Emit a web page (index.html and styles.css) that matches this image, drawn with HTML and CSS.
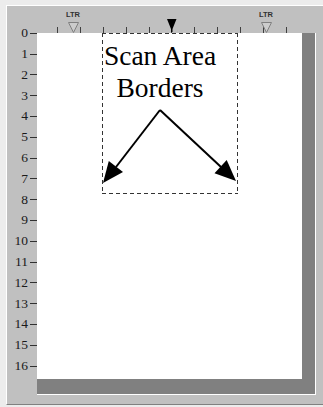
FILE: index.html
```html
<!DOCTYPE html>
<html>
<head>
<meta charset="utf-8">
<link rel="stylesheet" href="styles.css">
</head>
<body>
<div class="frame">
  <div class="vruler">
    <div class="row"><span class="num">0</span><span class="dash"></span></div>
    <div class="row"><span class="num">1</span><span class="dash"></span></div>
    <div class="row"><span class="num">2</span><span class="dash"></span></div>
    <div class="row"><span class="num">3</span><span class="dash"></span></div>
    <div class="row"><span class="num">4</span><span class="dash"></span></div>
    <div class="row"><span class="num">5</span><span class="dash"></span></div>
    <div class="row"><span class="num">6</span><span class="dash"></span></div>
    <div class="row"><span class="num">7</span><span class="dash"></span></div>
    <div class="row"><span class="num">8</span><span class="dash"></span></div>
    <div class="row"><span class="num">9</span><span class="dash"></span></div>
    <div class="row"><span class="num">10</span><span class="dash"></span></div>
    <div class="row"><span class="num">11</span><span class="dash"></span></div>
    <div class="row"><span class="num">12</span><span class="dash"></span></div>
    <div class="row"><span class="num">13</span><span class="dash"></span></div>
    <div class="row"><span class="num">14</span><span class="dash"></span></div>
    <div class="row"><span class="num">15</span><span class="dash"></span></div>
    <div class="row"><span class="num">16</span><span class="dash"></span></div>
  </div>
  <div class="hruler">
    <div class="ticks">
      <span class="tick"></span><span class="tick"></span><span class="tick"></span><span class="tick"></span>
      <span class="tick"></span><span class="tick"></span><span class="tick"></span><span class="tick"></span>
      <span class="tick"></span><span class="tick"></span><span class="tick"></span>
    </div>
    <div class="marker ltr-left">
      <span class="ltr">LTR</span>
      <svg class="hollow" width="11" height="11" viewBox="0 0 11 11"><polygon points="0.5,0.5 10.5,0.5 5.5,10.5" /></svg>
    </div>
    <div class="marker ltr-right">
      <span class="ltr">LTR</span>
      <svg class="hollow" width="11" height="11" viewBox="0 0 11 11"><polygon points="0.5,0.5 10.5,0.5 5.5,10.5" /></svg>
    </div>
    <svg class="tab" width="10" height="13" viewBox="0 0 10 13"><polygon points="0,0 9.5,0 5.5,10 5.5,13 4,13 4,10" /></svg>
  </div>
  <div class="desk">
    <div class="page">
      <div class="scan">
        <div class="scan-text">Scan Area<br>Borders</div>
        <svg class="arrows" width="136" height="161" viewBox="0 0 136 161">
          <line x1="58" y1="77" x2="14" y2="134" />
          <polygon points="1,150 6.8,128 21,139" />
          <line x1="58" y1="77" x2="119" y2="134" />
          <polygon points="134,148 112.5,140.3 124.7,127.1" />
        </svg>
      </div>
    </div>
  </div>
</div>
</body>
</html>
```
FILE: styles.css
```css
html, body {
  margin: 0;
  padding: 0;
}
body {
  background: #ececec;
  overflow: hidden;
  width: 323px;
  height: 407px;
}
.frame {
  margin: 5px 0 0 6px;
  display: grid;
  grid-template-columns: 30px 1fr;
  grid-template-rows: 27px auto;
  background: #c0c0c0;
  border-top: 1px solid #ffffff;
  border-left: 1px solid #ffffff;
  border-bottom: 1px solid #808080;
}
.vruler {
  grid-column: 1;
  grid-row: 1 / 3;
  padding-top: 16.9px;
  font-family: "Liberation Serif", serif;
  font-size: 13.5px;
  color: #1a1a1a;
}
.row {
  height: 20.8px;
  display: flex;
  align-items: center;
  justify-content: flex-end;
}
.num {
  line-height: 14px;
}
.dash {
  width: 7px;
  height: 1px;
  background: #303030;
  margin-left: 2px;
}
.hruler {
  grid-column: 2;
  grid-row: 1;
  position: relative;
}
.ticks {
  display: flex;
  align-items: flex-end;
  height: 100%;
  padding-left: 20px;
}
.tick {
  flex: 0 0 22.9px;
  height: 6px;
  box-sizing: border-box;
  border-left: 1px solid #404040;
}
.marker {
  position: absolute;
  top: 4px;
  display: flex;
  flex-direction: column;
  align-items: center;
  width: 20px;
}
.ltr-left { left: 26px; }
.ltr-right { left: 219px; }
.ltr {
  font-family: "Liberation Sans", sans-serif;
  font-weight: bold;
  font-size: 7.5px;
  line-height: 9px;
  color: #303030;
  margin-bottom: 3px;
}
.hollow polygon {
  fill: #cccccc;
  stroke: #808080;
  stroke-width: 1;
}
.tab {
  position: absolute;
  left: 130px;
  top: 13px;
}
.tab polygon {
  fill: #000;
}
.desk {
  grid-column: 2;
  grid-row: 2;
  justify-self: start;
  background: #808080;
  padding: 0 13px 15px 0;
  border-right: 1px solid #ffffff;
  border-bottom: 1px solid #ffffff;
  margin-bottom: 9px;
}
.page {
  width: 265px;
  height: 346px;
  background: #ffffff;
}
.scan {
  position: relative;
  margin-left: 65px;
  width: 136px;
  height: 161px;
  box-sizing: border-box;
  background:
    repeating-linear-gradient(90deg, #333 0 4px, transparent 4px 7px) top left / 100% 1px no-repeat,
    repeating-linear-gradient(90deg, #333 0 4px, transparent 4px 7px) bottom left / 100% 1px no-repeat,
    repeating-linear-gradient(180deg, #333 0 4px, transparent 4px 7px) top left / 1px 100% no-repeat,
    repeating-linear-gradient(180deg, #333 0 4px, transparent 4px 7px) top right / 1px 100% no-repeat;
}
.scan-text {
  padding-top: 7px;
  padding-right: 20px;
  text-align: center;
  font-family: "Liberation Serif", serif;
  font-size: 27.5px;
  line-height: 31.5px;
  color: #000;
}
.arrows {
  position: absolute;
  left: 0;
  top: 0;
}
.arrows line {
  stroke: #000;
  stroke-width: 2;
}
.arrows polygon {
  fill: #000;
}
```
